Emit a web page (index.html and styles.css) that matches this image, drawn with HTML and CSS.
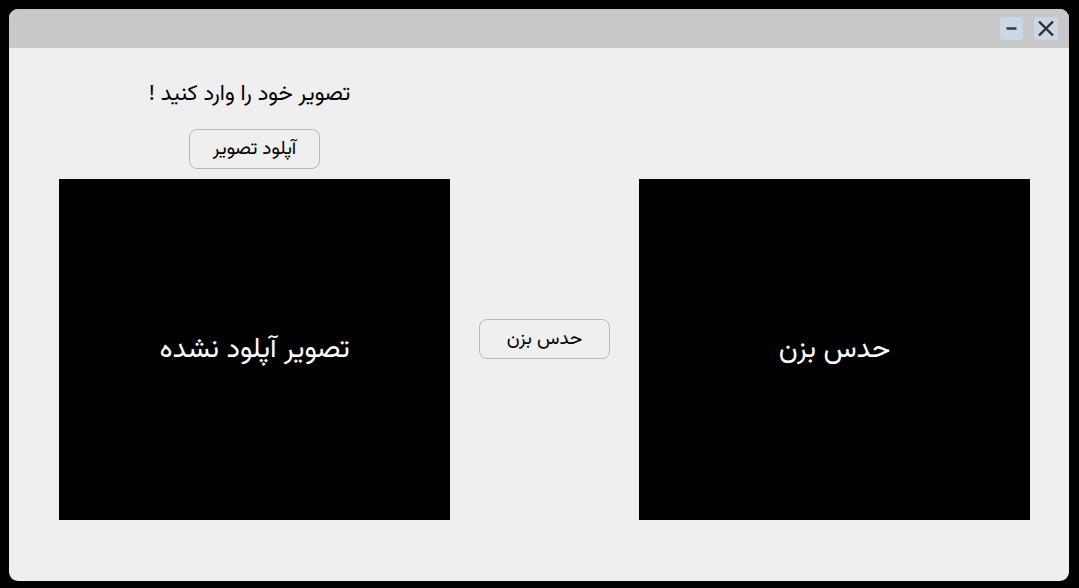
FILE: index.html
```html
<!DOCTYPE html>
<html lang="fa">
<head>
<meta charset="utf-8">
<link rel="stylesheet" href="styles.css">
</head>
<body>
<div class="window">
  <div class="titlebar">
    <button class="tbtn" aria-label="minimize">
      <svg width="23" height="23" viewBox="0 0 23 23"><line x1="6.5" y1="11.5" x2="16.5" y2="11.5" stroke="#3a3a3a" stroke-width="2.6"/></svg>
    </button>
    <button class="tbtn" aria-label="close">
      <svg width="24" height="23" viewBox="0 0 24 23"><path d="M5 4.5 L19 18.5 M19 4.5 L5 18.5" stroke="#2e2e2e" stroke-width="2.4" fill="none"/></svg>
    </button>
  </div>
  <div class="content">
    <div class="col col-left">
      <div class="heading" dir="rtl">تصویر خود را وارد کنید !</div>
      <button class="btn btn-upload" dir="rtl">آپلود تصویر</button>
      <div class="box" dir="rtl">تصویر آپلود نشده</div>
    </div>
    <div class="col col-mid">
      <button class="btn btn-detect" dir="rtl">حدس بزن</button>
    </div>
    <div class="col col-right">
      <div class="box" dir="rtl">حدس بزن</div>
    </div>
  </div>
</div>
</body>
</html>
```
FILE: styles.css
```css
html, body {
  margin: 0;
  padding: 0;
  background: #000;
}
body {
  padding: 9px 10px 7px 9px;
  font-family: "Vazirmatn", "Vazir", "Noto Sans Arabic", "DejaVu Sans", sans-serif;
}
.window {
  width: 1060px;
  height: 572px;
  background: #efefef;
  border-radius: 9px;
  overflow: hidden;
  display: flex;
  flex-direction: column;
}
.titlebar {
  height: 39px;
  background: #c8c8c8;
  display: flex;
  justify-content: flex-end;
  align-items: flex-start;
  padding: 8px 11px 0 0;
  box-sizing: border-box;
  gap: 11px;
}
.tbtn {
  width: 24px;
  height: 23px;
  padding: 0;
  border: none;
  border-radius: 4px;
  background: #c9d7e7;
  display: flex;
  align-items: center;
  justify-content: center;
}
.tbtn:first-child { width: 23px; }
.content {
  display: flex;
  padding: 0 39px 0 50px;
}
.col {
  display: flex;
  flex-direction: column;
  align-items: center;
}
.col-left { width: 391px; }
.col-mid { width: 189px; padding-top: 271px; }
.col-right { width: 391px; padding-top: 131px; }
.heading {
  margin-top: 33px;
  height: 28px;
  line-height: 28px;
  font-size: 22px;
  color: #000;
  padding-right: 10px;
}
.btn {
  width: 131px;
  height: 40px;
  border: 1px solid #b9b9b9;
  border-radius: 8px;
  background: #efefef;
  font-family: inherit;
  font-size: 19px;
  color: #000;
  padding: 0;
}
.btn-upload { margin-top: 20px; }
.box {
  margin-top: 10px;
  width: 391px;
  height: 341px;
  background: #000;
  color: #fff;
  font-size: 28px;
  display: flex;
  align-items: center;
  justify-content: center;
}
.col-right .box { margin-top: 0; }
```
